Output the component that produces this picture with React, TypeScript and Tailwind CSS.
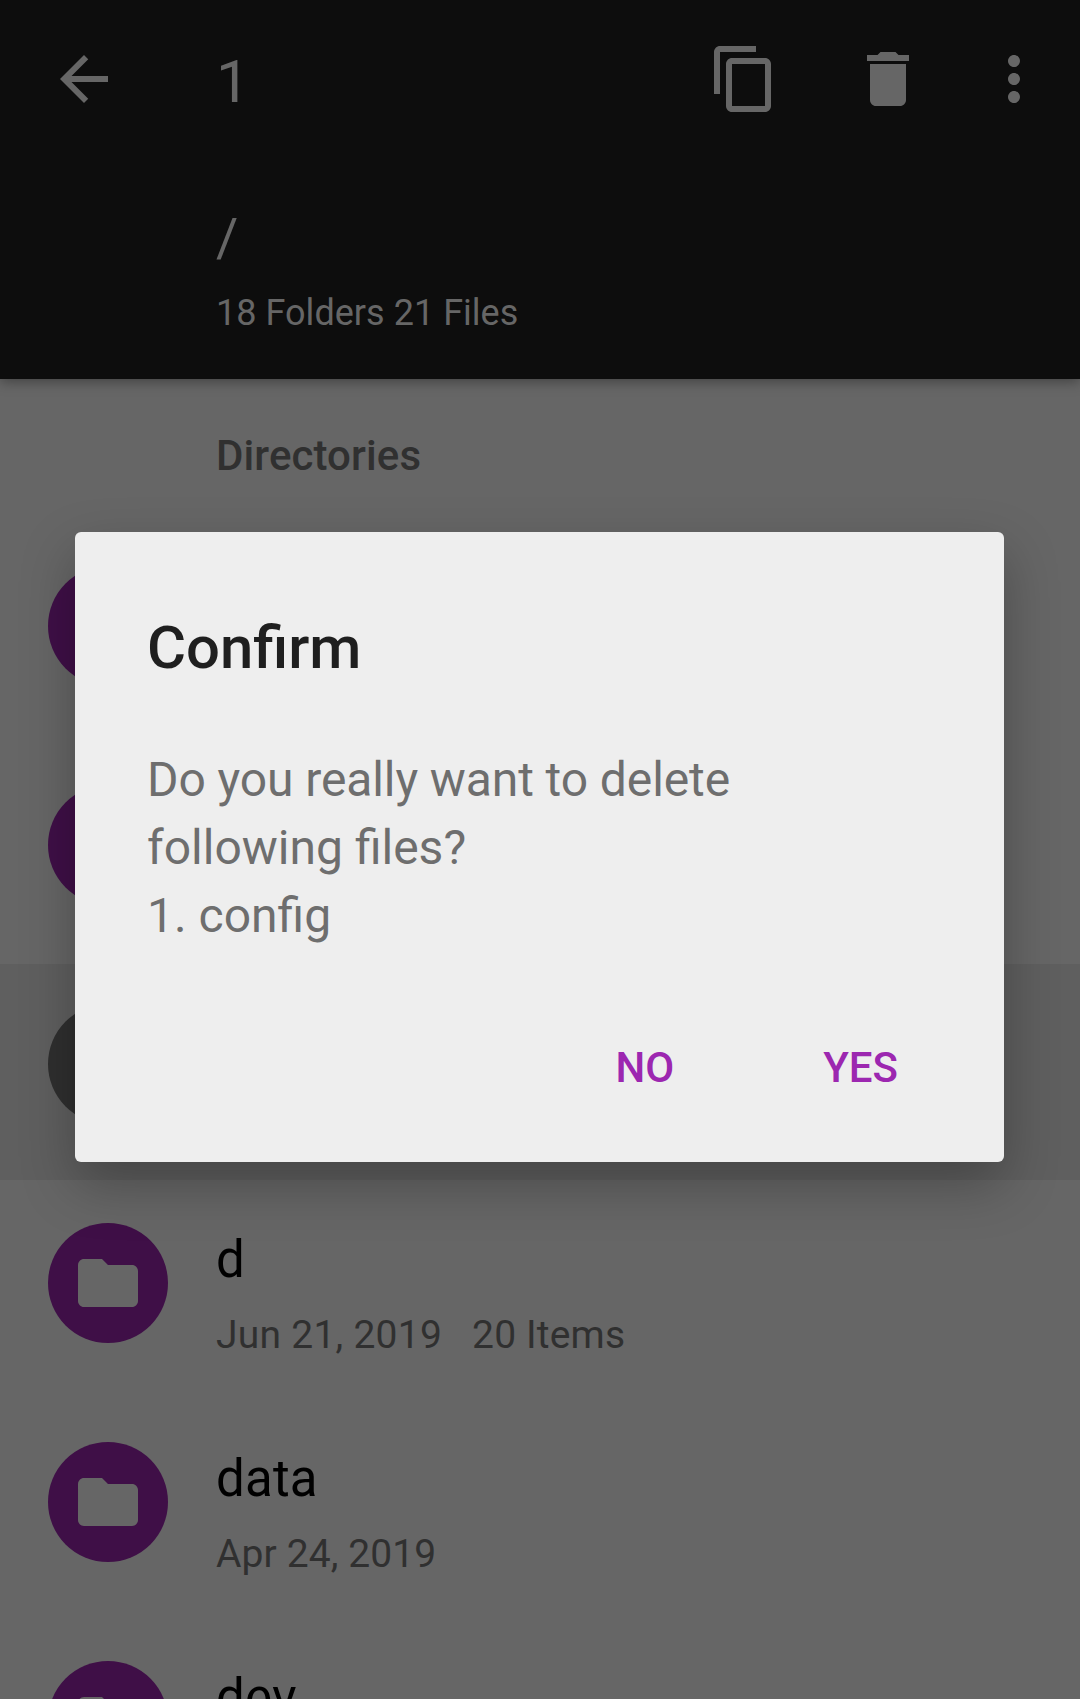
import React from "react";

const Icon = ({ d, className }: { d: string; className?: string }) => (
  <svg className={`h-[72px] w-[72px] shrink-0 ${className ?? ""}`} viewBox="0 0 24 24" fill="#666666">
    <path d={d} />
  </svg>
);

const icons = {
  back: "M20 11H7.83l5.59-5.59L12 4l-8 8 8 8 1.41-1.41L7.83 13H20v-2z",
  copy: "M16 1H4c-1.1 0-2 .9-2 2v14h2V3h12V1zm3 4H8c-1.1 0-2 .9-2 2v14c0 1.1.9 2 2 2h11c1.1 0 2-.9 2-2V7c0-1.1-.9-2-2-2zm0 16H8V7h11v14z",
  trash: "M6 19c0 1.1.9 2 2 2h8c1.1 0 2-.9 2-2V7H6v12zM19 4h-3.5l-1-1h-5l-1 1H5v2h14V4z",
  more: "M12 8c1.1 0 2-.9 2-2s-.9-2-2-2-2 .9-2 2 .9 2 2 2zm0 2c-1.1 0-2 .9-2 2s.9 2 2 2 2-.9 2-2-.9-2-2-2zm0 6c-1.1 0-2 .9-2 2s.9 2 2 2 2-.9 2-2-.9-2-2-2z",
  folder: "M10 4H4c-1.1 0-1.99.9-1.99 2L2 18c0 1.1.9 2 2 2h16c1.1 0 2-.9 2-2V8c0-1.1-.9-2-2-2h-8l-2-2z",
};

type Row = { name?: string; date?: string; items?: string; selected?: boolean };

const rows: Row[] = [
  {},
  {},
  { selected: true },
  { name: "d", date: "Jun 21, 2019", items: "20 Items" },
  { name: "data", date: "Apr 24, 2019" },
  { name: "dev" },
];

const DirectoryRow = ({ name, date, items, selected }: Row) => (
  <div className={`mb-[3px] flex h-[216px] items-start pl-12 ${selected ? "bg-[#5f5f5f]" : ""}`}>
    <div
      className={`mt-10 flex h-[120px] w-[120px] shrink-0 items-center justify-center rounded-full ${
        selected ? "bg-[#2f2f2f]" : "bg-[#3f0f47]"
      }`}
    >
      <Icon d={icons.folder} />
    </div>
    <div className="ml-12 pt-[47px]">
      <div className="text-[51px] leading-[60px] tracking-[0.2px] text-black">{name}</div>
      <div className="flex gap-[30px] pt-[22px] text-[39px] leading-[46px] text-[#303030]">
        <span className={items ? "tracking-[0.25px]" : "tracking-[0.1px]"}>{date}</span>
        <span className="tracking-[0.15px]">{items}</span>
      </div>
    </div>
  </div>
);

export default function App() {
  return (
    <div className="relative h-[1699px] w-[1080px] overflow-hidden bg-[#666666] font-['Roboto',sans-serif]">
      <header className="relative h-[379px] bg-[#0d0d0d] text-[#666666] shadow-[0_3px_12px_rgba(0,0,0,0.35)]">
        <div className="flex h-[158px] items-center pl-12 pr-[30px]">
          <Icon d={icons.back} />
          <span className="ml-24 pt-[5px] text-[60px] leading-none">1</span>
          <Icon d={icons.copy} className="ml-auto" />
          <Icon d={icons.trash} className="ml-[72px]" />
          <Icon d={icons.more} className="ml-[54px]" />
        </div>
        <div className="pl-[216px] pt-12 text-[54px] leading-[64px]">/</div>
        <div className="pl-[216px] pt-[20px] text-[36px] leading-[46px] tracking-[0.03px]">18 Folders 21 Files</div>
      </header>

      <main>
        <div className="flex h-[147px] items-center pb-[10px] pl-[216px] pt-[16px] text-[42px] font-medium tracking-[0.1px] text-[#303030]">
          Directories
        </div>
        {rows.map((row, i) => (
          <DirectoryRow key={i} {...row} />
        ))}
      </main>

      <div
        role="dialog"
        className="absolute left-[75px] top-[532px] flex h-[630px] w-[929px] flex-col rounded-[6px] bg-[#eeeeee] px-[72px] shadow-[0_22px_54px_rgba(0,0,0,0.28)]"
      >
        <h1 className="pt-[80px] text-[59.8px] font-medium leading-[72px] text-[#1f1f1f]">Confirm</h1>
        <p className="pt-[62px] text-[48px] leading-[68px] text-[#6e6e6e]">
          <span className="tracking-[-0.1px]">Do you really want to delete</span>
          <br />
          following files?
          <br />
          1. config
        </p>
        <div className="flex justify-end gap-[149px] pr-[34px] pt-[93px] text-[42px] font-medium leading-[50px] text-[#9c27b0]">
          <button>NO</button>
          <button>YES</button>
        </div>
      </div>
    </div>
  );
}
